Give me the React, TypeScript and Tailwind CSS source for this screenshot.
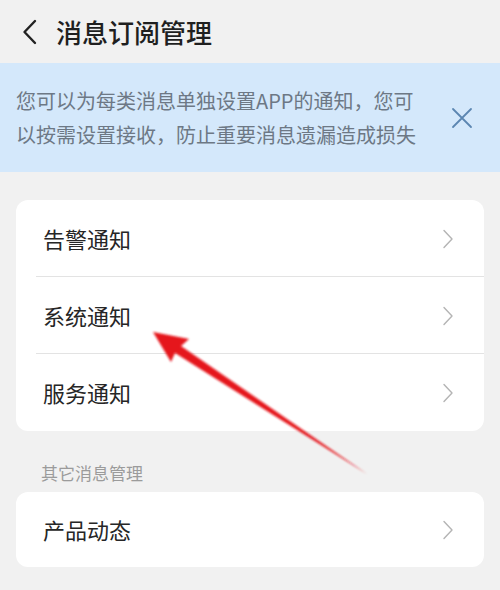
const items = ['告警通知', '系统通知', '服务通知'];

function Chevron() {
  return (
    <svg width="12" height="20" viewBox="0 0 12 20" fill="none" className="shrink-0">
      <path d="M2 1.5 L10 10 L2 18.5" stroke="#b4b4b4" strokeWidth="1.4" strokeLinecap="round" strokeLinejoin="round" />
    </svg>
  );
}

function Row({ label, divider }: { label: string; divider: boolean }) {
  return (
    <div className="relative flex h-[77px] items-center justify-between pl-[27px] pr-[30px]">
      <span className="text-[22px] text-[#262626]">{label}</span>
      <Chevron />
      {divider && <div className="absolute bottom-0 left-[20px] right-0 h-px bg-[#e3e3e3]" />}
    </div>
  );
}

export default function App() {
  return (
    <div
      className="relative min-h-[590px] w-[500px] overflow-hidden bg-[#f1f1f1]"
      style={{ fontFamily: '"Noto Sans CJK SC", "Noto Sans", sans-serif' }}
    >
      {/* header */}
      <div className="flex h-[63px] items-center pl-[21px]">
        <svg width="18" height="26" viewBox="0 0 18 26" fill="none">
          <path d="M14 2 L3.5 13 L14 24" stroke="#222" strokeWidth="2.4" strokeLinecap="round" strokeLinejoin="round" />
        </svg>
        <h1 className="ml-[17px] text-[26px] font-medium leading-none text-[#1f1f1f]">消息订阅管理</h1>
      </div>

      {/* tip banner */}
      <div className="flex h-[109px] items-center justify-between bg-[#d4e8fb] pl-[16px] pr-[27px]">
        <p className="text-[20px] leading-[34px] text-[#6d7885]">
          您可以为每类消息单独设置APP的通知，您可
          <br />
          以按需设置接收，防止重要消息遗漏造成损失
        </p>
        <svg width="22" height="22" viewBox="0 0 22 22" fill="none" className="shrink-0">
          <path d="M2 2 L20 20 M20 2 L2 20" stroke="#5b86b1" strokeWidth="1.8" strokeLinecap="round" />
        </svg>
      </div>

      {/* main list */}
      <div className="mx-[16px] mt-[28px] rounded-[12px] bg-white">
        {items.map((item, i) => (
          <Row key={item} label={item} divider={i < items.length - 1} />
        ))}
      </div>

      <div className="mt-[30px] pl-[41px] text-[17px] leading-[24px] text-[#9b9b9b]">其它消息管理</div>

      <div className="mx-[16px] mt-[7px] rounded-[12px] bg-white">
        <div className="flex h-[75px] items-center justify-between pl-[27px] pr-[30px]">
          <span className="text-[22px] text-[#262626]">产品动态</span>
          <Chevron />
        </div>
      </div>

      {/* red annotation arrow */}
      <svg width="500" height="590" viewBox="0 0 500 590" className="pointer-events-none absolute left-0 top-0">
        <defs>
          <filter id="soft" x="-10%" y="-10%" width="120%" height="120%">
            <feGaussianBlur stdDeviation="0.8" />
          </filter>
        </defs>
        <polygon
          points="153,332 189,339 181,346 367,474 175,353 171,362"
          fill="#e5141b"
          filter="url(#soft)"
        />
      </svg>
    </div>
  );
}
